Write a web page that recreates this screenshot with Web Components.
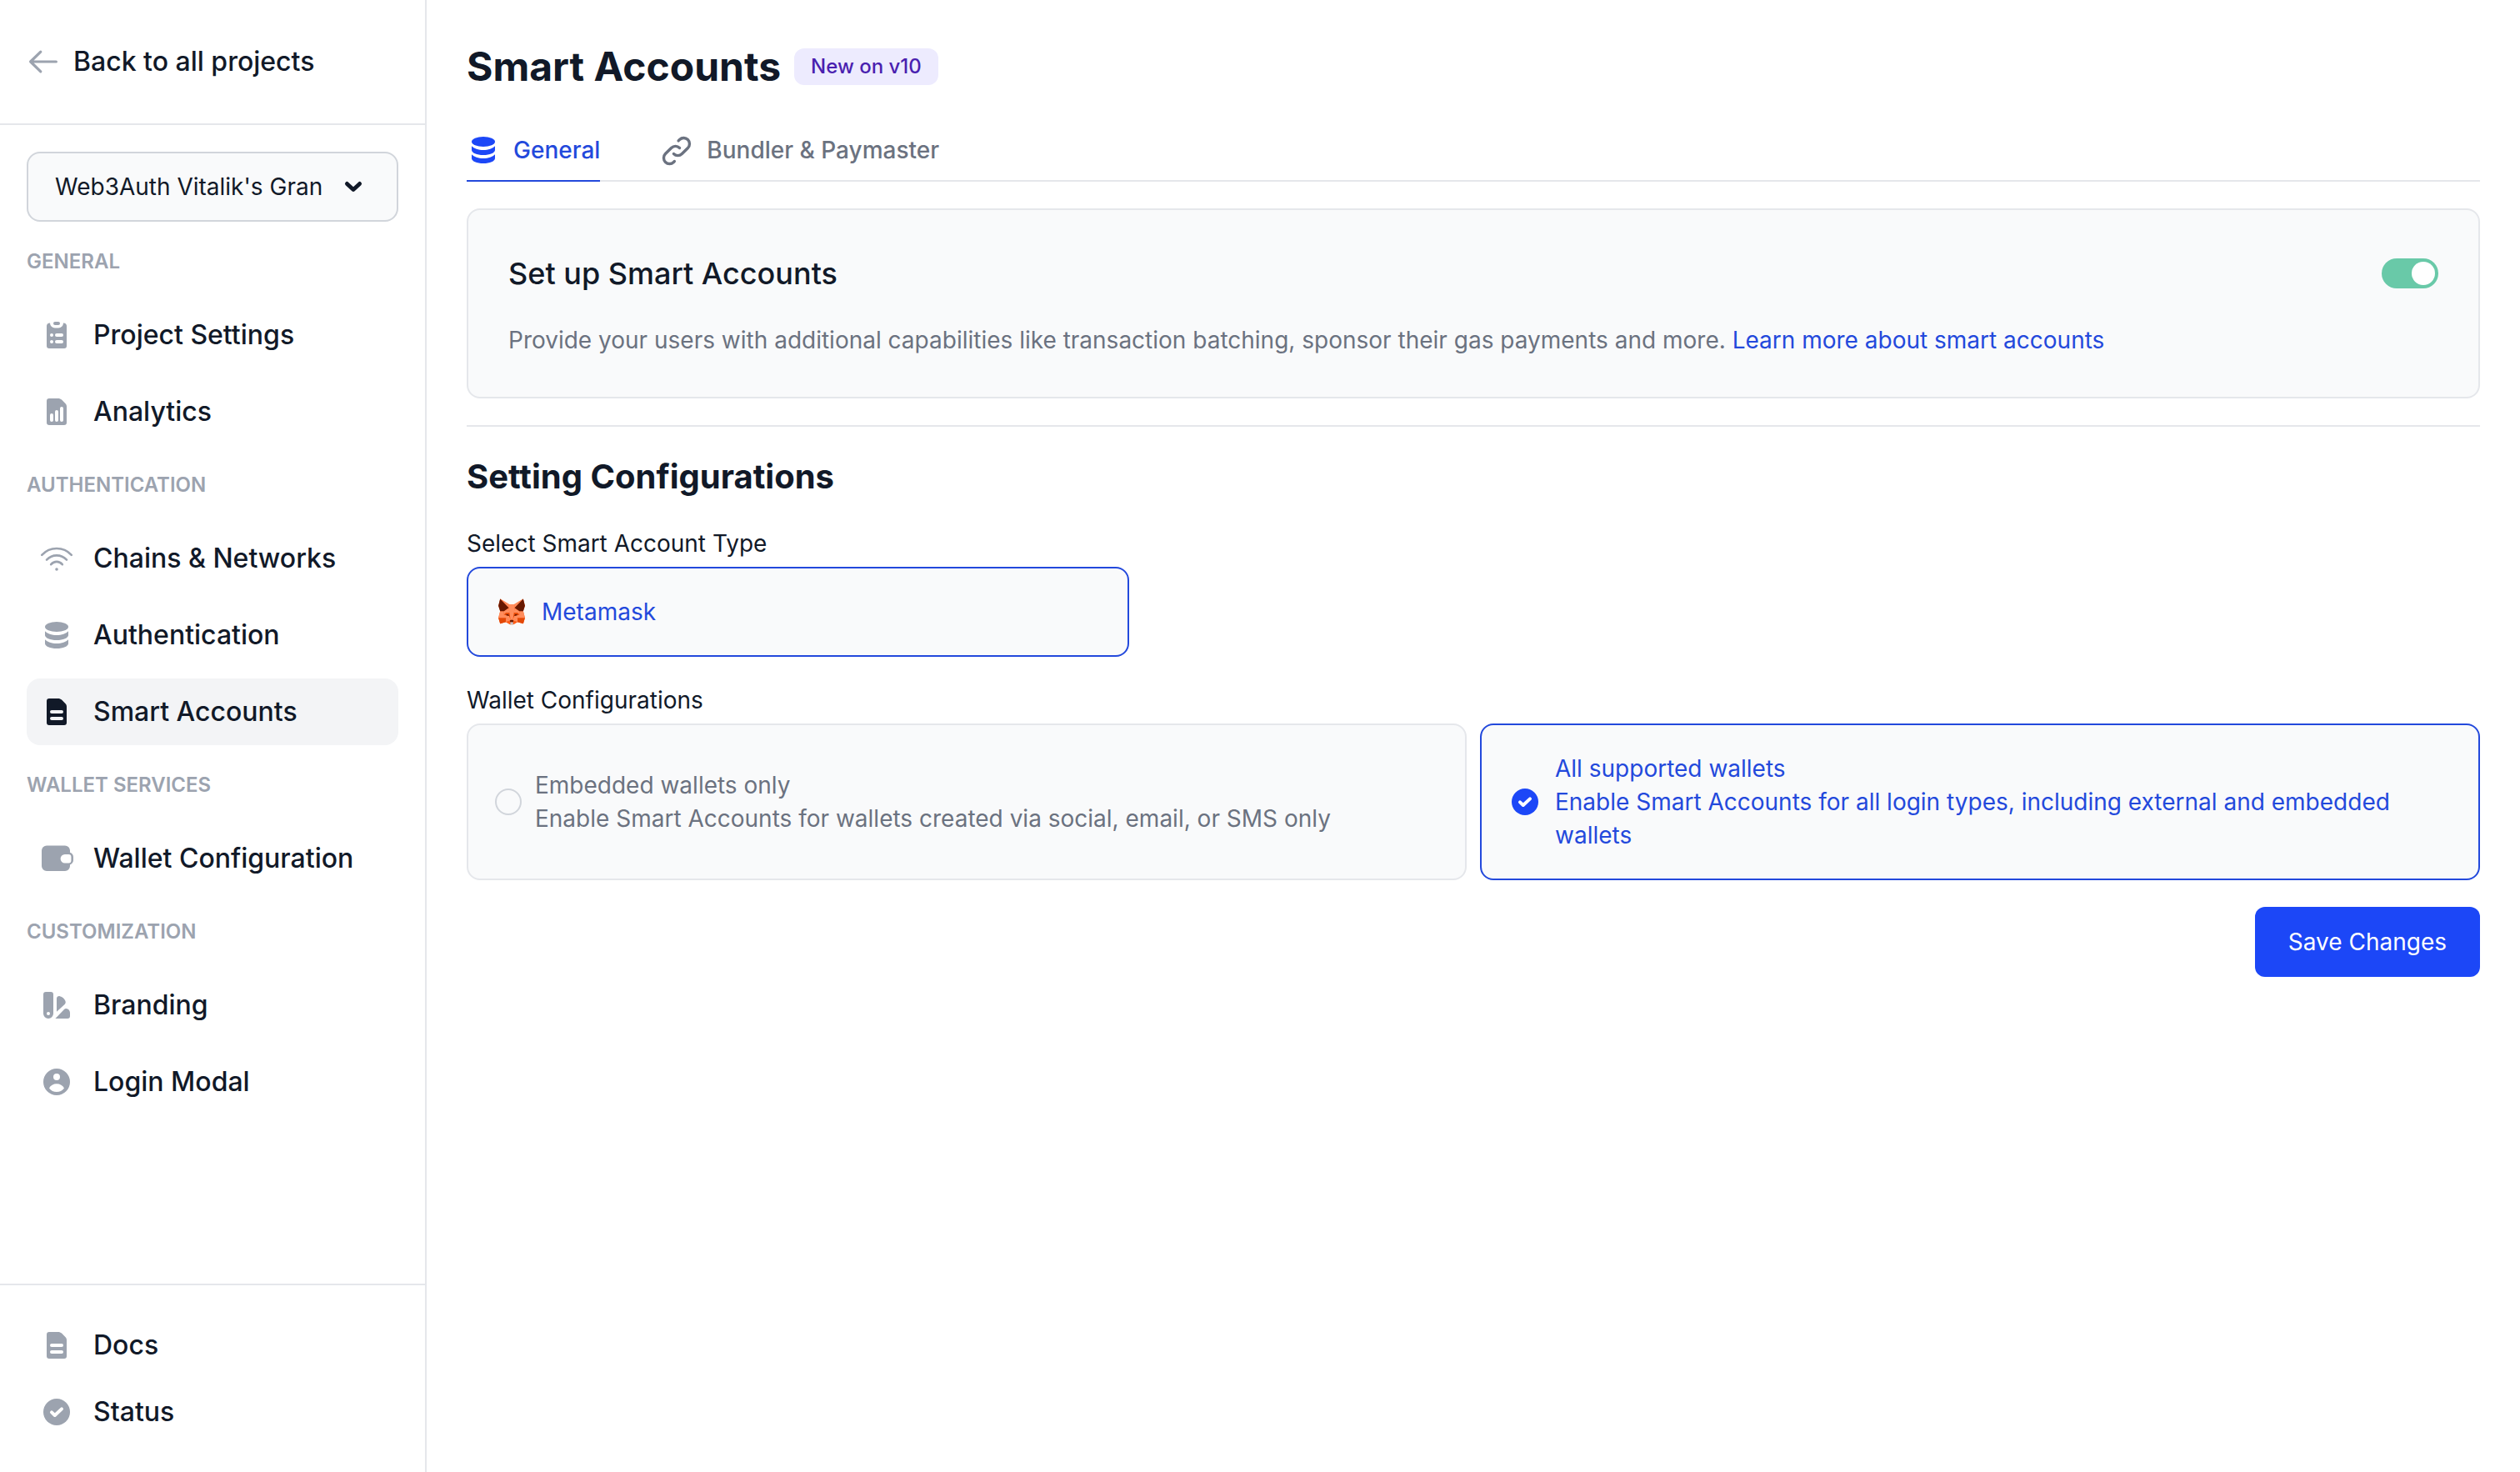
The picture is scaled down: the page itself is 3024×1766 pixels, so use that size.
<!DOCTYPE html>
<html lang="en">
<head>
<meta charset="utf-8">
<meta name="viewport" content="width=device-width, initial-scale=1">
<title>Smart Accounts</title>
<style>
  :root {
    --ink: #111928;
    --muted: #6b7280;
    --soft: #9ca3af;
    --line: #e5e7eb;
    --line-strong: #d1d5db;
    --surface: #f9fafb;
    --primary: #1c47f7;
    --primary-ink: #2349dc;
  }
  body {
    margin: 0;
    background: #fff;
    color: var(--ink);
    font-family: Inter, "Liberation Sans", sans-serif;
    font-size: 28px;
    line-height: 40px;
  }
</style>
</head>
<body>
<dashboard-app></dashboard-app>

<script>
const ICONS = {
  arrow: ['0 0 20 20', '<path d="M17.7 10H2.3M8.4 4.1L2.3 10l6.1 5.9" fill="none" stroke="currentColor" stroke-width="1.6" stroke-linecap="round" stroke-linejoin="round"/>'],
  chevron: ['0 0 20 20', '<path d="M6.2 8.2L10 11.8l3.8-3.6" fill="none" stroke="currentColor" stroke-width="2.4" stroke-linecap="round" stroke-linejoin="round"/>'],
  clipboard: ['0 0 20 20', '<rect x="8" y="2" width="4" height="2" rx="1"/><path fill-rule="evenodd" d="M6 2.8A3 3 0 0 0 9 5.8h2a3 3 0 0 0 3-3 2 2 0 0 1 2 1.6V16.5a1.5 1.5 0 0 1-1.5 1.5h-9A1.5 1.5 0 0 1 4 16.5V4.4a2 2 0 0 1 2-1.6zM7 9a1 1 0 0 0 0 2 1 1 0 0 0 0-2zm3 0a1 1 0 0 0 0 2h3a1 1 0 0 0 0-2zm-3 4a1 1 0 0 0 0 2 1 1 0 0 0 0-2zm3 0a1 1 0 0 0 0 2h3a1 1 0 0 0 0-2z"/>'],
  analytics: ['0 0 20 20', '<path fill-rule="evenodd" d="M5.5 2h5.4c.8 0 1.5.3 2.1.8l2.3 2.3c.5.5.7 1.1.7 1.8V16.5a1.5 1.5 0 0 1-1.5 1.5h-9A1.5 1.5 0 0 1 4 16.5v-13A1.5 1.5 0 0 1 5.5 2zM7 11a1 1 0 0 0-1 1v3a1 1 0 0 0 2 0v-3a1 1 0 0 0-1-1zm3-2a1 1 0 0 0-1 1v5a1 1 0 0 0 2 0v-5a1 1 0 0 0-1-1zm3-2a1 1 0 0 0-1 1v7a1 1 0 0 0 2 0V8a1 1 0 0 0-1-1z"/>'],
  wifi: ['0 0 20 20', '<g fill="none" stroke="currentColor" stroke-width="1.3" stroke-linecap="round"><path d="M1.1 7.9C6 2.7 14 2.7 18.9 7.9M4 10.8c3.3-3.5 8.7-3.5 12 0M6.6 13.6c1.9-2.2 4.9-2.2 6.8 0"/></g><circle cx="10" cy="16.5" r=".9"/>'],
  database: ['0 0 20 20', '<ellipse cx="10" cy="5" rx="7" ry="3"/><path d="M3 7.6C4.4 9 7 10 10 10s5.6-1 7-2.4V10c0 1.7-3.1 3-7 3s-7-1.3-7-3zM3 12.6C4.4 14 7 15 10 15s5.6-1 7-2.4V15c0 1.7-3.1 3-7 3s-7-1.3-7-3z"/>'],
  file: ['0 0 20 20', '<path fill-rule="evenodd" d="M5.5 2h5.4c.8 0 1.5.3 2.1.8l2.3 2.3c.5.5.7 1.1.7 1.8V16.5a1.5 1.5 0 0 1-1.5 1.5h-9A1.5 1.5 0 0 1 4 16.5v-13A1.5 1.5 0 0 1 5.5 2zM7 9a1 1 0 0 0 0 2h6a1 1 0 0 0 0-2zm0 4a1 1 0 0 0 0 2h6a1 1 0 0 0 0-2z"/>'],
  wallet: ['0 0 20 20', '<path fill-rule="evenodd" d="M4 2.3h11a3 3 0 0 1 3 3v1.1c1.2.4 2 1.4 2 2.7v1.9c0 1.3-.8 2.3-2 2.7v.8a3 3 0 0 1-3 3H4a3 3 0 0 1-3-3v-9.2a3 3 0 0 1 3-3zM14.9 7.5a2.6 2.6 0 0 0 0 5.2h2.3a1.5 1.5 0 0 0 1.5-1.5V9a1.5 1.5 0 0 0-1.5-1.5z"/>'],
  swatch: ['0 0 20 20', '<path fill-rule="evenodd" d="M3.5 2h3A1.5 1.5 0 0 1 8 3.5V15a3 3 0 0 1-6 0V3.5A1.5 1.5 0 0 1 3.5 2zM5 14a1 1 0 1 0 0 2 1 1 0 0 0 0-2z"/><path d="M10 13.9V6c0-1 .9-1.6 1.9-1.4 1.5.3 2.8 1.4 3.3 2.8.3.8.2 1.5-.4 2.1zM9.2 18l5.3-5.500c.6-.6 1.4-.6 2.1-.2.9.5 1.4 1.3 1.4 2.3V16.5a1.5 1.5 0 0 1-1.5 1.5z"/>'],
  user: ['0 0 20 20', '<path fill-rule="evenodd" d="M10 2a8 8 0 1 0 0 16 8 8 0 0 0 0-16zM10 5a2 2 0 1 1 0 4 2 2 0 0 1 0-4zM5.5 13.7C6.3 12.1 8 11.1 10 11.1s3.7 1 4.5 2.6C13.4 15.2 11.8 16 10 16s-3.4-.8-4.5-2.3z"/>'],
  check: ['0 0 20 20', '<circle cx="10" cy="10" r="8"/><path d="M7 10.2L8.9 12 13 8.2" fill="none" stroke="#fff" stroke-width="2" stroke-linecap="round" stroke-linejoin="round"/>'],
  link: ['-.75 -.75 20 20', '<path d="M11.013 7.962a3.519 3.519 0 0 0-4.975 0l-3.554 3.555a3.518 3.518 0 0 0 4.975 4.975l.461-.46m-.461-4.515a3.518 3.518 0 0 0 4.975 0l3.553-3.554a3.518 3.518 0 0 0-4.974-4.975l-.713.712" fill="none" stroke="currentColor" stroke-width="1.7" stroke-linecap="round" stroke-linejoin="round"/>'],
  fox: ['-18 -20 178 178', '<path fill="#ff5c16" d="M132.7 132.2l-30.5-9.1-23 13.8H63.1l-23-13.800-30.500 9.100L.3 100.800 9.600 66 .3 36.700 9.600.3l47.600 28.500H85L132.700.3l9.300 36.400-9.300 29.300 9.300 34.800z"/><path fill="#ff8d5d" d="M9.600.3l47.700 28.500-1.900 19.600zM40.100 100.800l21 16-21 6.300zM59.400 74.400l-4-26L29.600 66v18.300l10.500-9.900zM132.700.3L85 28.800l1.900 19.600zM102.200 100.800l-21 16 21 6.300zM112.700 66L86.900 48.400l-4 26h19.300l10.500 9.900z"/><path fill="#e34807" d="M40.100 123.100l-30.500 9.100-9.300-31.400h39.800zM59.400 74.400l5.800 37.600-8.100-20.900-27.500-6.800 10.500-9.900zM102.200 123.100l30.500 9.100 9.300-31.400h-39.800zM82.900 74.400L77.100 112l8-20.900 27.600-6.800-10.500-9.900z"/><path fill="#ff8d5d" d="M.3 100.800L9.600 66h19.900l.1 18.300 27.500 6.800 8.100 20.900-4.100 4.800-21-16zM142 100.800L132.700 66h-20l-.1 18.300-27.500 6.800-8 20.900 4.100 4.800 21-16zM85 28.800H57.300l-1.900 19.500 9.800 63.700h11.900l9.800-63.700z"/><path fill="#661800" d="M9.600.3L.3 36.700 9.600 66h19.900l25.900-17.600zM53.500 82.300h-9l-5 4.800L57 91.400zM132.700.3l9.300 36.400-9.300 29.300h-20L86.900 48.400zM88.800 82.300h9l5 4.800-17.500 4.400zM79.300 124.500l2-7.700-4.100-4.700H65.300l-4.100 4.700 2 7.700z"/><path fill="#c0c4cd" d="M79.300 124.500v12.400h-16v-12.400z"/><path fill="#ff5c16" d="M40.100 123.100l23.100 13.800v-12.400l-2-7.700zM102.200 123.100l-22.900 13.800v-12.400l2-7.700z"/>']
};

/* Registers an element whose shadow root is cloned from one template. */
function define(name, html, setup) {
  const template = document.createElement('template');
  template.innerHTML = '<style>*{box-sizing:border-box}</style>' + html;
  customElements.define(name, class extends HTMLElement {
    connectedCallback() {
      if (this.shadowRoot) return;
      this.attachShadow({ mode: 'open' }).append(template.content.cloneNode(true));
      if (setup) setup(this, this.shadowRoot);
    }
  });
}

define('ui-icon', `
  <style>
    :host { display: block; flex: none; width: 40px; height: 40px; }
    svg { display: block; width: 100%; height: 100%; }
  </style>
  <svg fill="currentColor" aria-hidden="true"></svg>`,
  (host, root) => {
    const [box, art] = ICONS[host.getAttribute('name')];
    const svg = root.querySelector('svg');
    svg.setAttribute('viewBox', box);
    svg.innerHTML = art;
  });

define('nav-item', `
  <style>
    :host { display: block; }
    a {
      display: flex; align-items: center; gap: 24px; height: 80px; padding: 0 16px;
      border-radius: 16px; color: var(--ink); text-decoration: none;
      font-size: 32px; font-weight: 500; white-space: nowrap;
    }
    ui-icon { color: var(--soft); }
    :host([active]) a { background: #f3f4f6; }
    :host([active]) ui-icon { color: var(--ink); }
  </style>
  <a href="#"><slot></slot></a>`,
  (host, root) => {
    const link = root.querySelector('a');
    const icon = document.createElement('ui-icon');
    icon.setAttribute('name', host.getAttribute('icon'));
    link.prepend(icon);
    if (host.hasAttribute('active')) link.setAttribute('aria-current', 'page');
  });

define('nav-group', `
  <style>
    :host { display: block; }
    h2 { margin: 32px 0; color: var(--soft); font-size: 24px; line-height: 32px; font-weight: 600; text-transform: uppercase; }
    div { display: flex; flex-direction: column; gap: 12px; }
  </style>
  <h2></h2>
  <div><slot></slot></div>`,
  (host, root) => { root.querySelector('h2').textContent = host.getAttribute('heading'); });

define('project-select', `
  <style>
    :host { display: grid; align-items: center; }
    select, ui-icon { grid-area: 1 / 1; }
    select {
      appearance: none; width: 100%; height: 84px; margin: 0; padding: 0 80px 0 32px;
      border: 2px solid var(--line-strong); border-radius: 16px; background: var(--surface);
      color: var(--ink); font: inherit;
    }
    ui-icon { justify-self: end; margin-right: 34px; pointer-events: none; }
  </style>
  <select aria-label="Project"><option>Web3Auth Vitalik's Gran</option></select>
  <ui-icon name="chevron"></ui-icon>`);

define('side-bar', `
  <style>
    :host { display: flex; flex-direction: column; width: 512px; flex: none; border-right: 2px solid var(--line); }
    .back {
      display: flex; align-items: center; gap: 16px; height: 150px; padding: 0 32px;
      border-bottom: 2px solid var(--line); color: var(--ink); text-decoration: none;
      font-size: 32px; font-weight: 500;
    }
    .back ui-icon { color: var(--soft); }
    nav { flex: 1; padding: 32px; }
    footer { padding: 32px; border-top: 2px solid var(--line); }
  </style>
  <a class="back" href="#"><ui-icon name="arrow"></ui-icon>Back to all projects</a>
  <nav>
    <project-select></project-select>
    <nav-group heading="General">
      <nav-item icon="clipboard">Project Settings</nav-item>
      <nav-item icon="analytics">Analytics</nav-item>
    </nav-group>
    <nav-group heading="Authentication">
      <nav-item icon="wifi">Chains &amp; Networks</nav-item>
      <nav-item icon="database">Authentication</nav-item>
      <nav-item icon="file" active>Smart Accounts</nav-item>
    </nav-group>
    <nav-group heading="Wallet Services">
      <nav-item icon="wallet">Wallet Configuration</nav-item>
    </nav-group>
    <nav-group heading="Customization">
      <nav-item icon="swatch">Branding</nav-item>
      <nav-item icon="user">Login Modal</nav-item>
    </nav-group>
  </nav>
  <footer>
    <nav-item icon="file">Docs</nav-item>
    <nav-item icon="check">Status</nav-item>
  </footer>`);

define('page-header', `
  <style>
    :host { display: flex; align-items: center; gap: 16px; }
    h1 { margin: 0; font-size: 48px; line-height: 64px; font-weight: 700; }
    .badge { padding: 4px 20px; border-radius: 12px; background: #edebfe; color: #4a1fb0; font-size: 24px; line-height: 36px; font-weight: 500; }
  </style>
  <h1><slot></slot></h1>
  <span class="badge"><slot name="badge"></slot></span>`);

define('tab-bar', `
  <style>
    :host { display: block; }
    nav { display: flex; gap: 72px; border-bottom: 2px solid var(--line); }
    a {
      display: flex; align-items: center; gap: 16px; padding-bottom: 16px; margin-bottom: -2px;
      border-bottom: 2px solid transparent; color: var(--muted); text-decoration: none; font-weight: 500;
    }
    a[aria-current] { color: var(--primary-ink); border-color: var(--primary-ink); }
    a[aria-current] ui-icon { color: var(--primary); }
  </style>
  <nav aria-label="Sections">
    <a href="#" aria-current="page"><ui-icon name="database"></ui-icon>General</a>
    <a href="#"><ui-icon name="link"></ui-icon>Bundler &amp; Paymaster</a>
  </nav>`);

define('feature-card', `
  <style>
    :host { display: block; padding: 48px; border: 2px solid var(--line); border-radius: 16px; background: var(--surface); box-sizing: border-box; }
    label { display: flex; align-items: center; justify-content: space-between; font-size: 36px; line-height: 56px; font-weight: 500; }
    input {
      appearance: none; display: flex; flex: none; justify-content: flex-start; width: 68px; height: 36px;
      margin: 0; padding: 4px; border-radius: 18px; background: var(--line-strong);
    }
    input::before { content: ""; width: 28px; height: 28px; border-radius: 50%; background: #fff; }
    input:checked { justify-content: flex-end; background: #69c9a8; }
    p { margin: 32px 0 0; color: var(--muted); }
    a { color: var(--primary-ink); text-decoration: none; }
  </style>
  <label>Set up Smart Accounts<input type="checkbox" role="switch" checked></label>
  <p>Provide your users with additional capabilities like transaction batching, sponsor their gas payments and more. <a href="#">Learn more about smart accounts</a></p>`);

define('account-type', `
  <style>
    :host { display: block; }
    h3 { margin: 0 0 8px; font-size: 28px; line-height: 40px; font-weight: 400; }
    .grid { display: grid; grid-template-columns: repeat(3, 1fr); gap: 16px; }
    button {
      display: flex; align-items: center; gap: 16px; padding: 32px; border: 2px solid var(--primary-ink);
      border-radius: 16px; background: var(--surface); color: var(--primary-ink); font: inherit; line-height: 40px;
    }
  </style>
  <h3>Select Smart Account Type</h3>
  <div class="grid"><button type="button" aria-pressed="true"><ui-icon name="fox"></ui-icon>Metamask</button></div>`);

define('wallet-options', `
  <style>
    :host { display: block; }
    fieldset { margin: 0; padding: 0; border: 0; min-width: 0; }
    legend { padding: 0; margin-bottom: 8px; }
    .grid { display: grid; grid-template-columns: 1fr 1fr; gap: 16px; }
    label {
      display: flex; align-items: center; gap: 16px; padding: 32px; border: 2px solid var(--line);
      border-radius: 16px; background: var(--surface); color: var(--muted);
    }
    .mark { display: grid; flex: none; place-items: center; }
    .mark > * { grid-area: 1 / 1; }
    input { appearance: none; width: 32px; height: 32px; margin: 0; border: 2px solid var(--line-strong); border-radius: 50%; }
    ui-icon { display: none; color: var(--primary); pointer-events: none; }
    input:checked { border: 0; }
    input:checked + ui-icon { display: block; }
    label:has(:checked) { border-color: var(--primary-ink); color: var(--primary-ink); }
    .text span { display: block; }
  </style>
  <fieldset>
    <legend>Wallet Configurations</legend>
    <div class="grid">
      <label>
        <span class="mark"><input type="radio" name="wallets"><ui-icon name="check"></ui-icon></span>
        <span class="text"><span>Embedded wallets only</span><span>Enable Smart Accounts for wallets created via social, email, or SMS only</span></span>
      </label>
      <label>
        <span class="mark"><input type="radio" name="wallets" checked><ui-icon name="check"></ui-icon></span>
        <span class="text"><span>All supported wallets</span><span>Enable Smart Accounts for all login types, including external and embedded wallets</span></span>
      </label>
    </div>
  </fieldset>`);

define('primary-button', `
  <style>
    :host { display: block; }
    button { display: block; height: 84px; padding: 0 40px; border: 0; border-radius: 12px; background: var(--primary); color: #fff; font: inherit; }
  </style>
  <button type="button"><slot></slot></button>`);

define('dashboard-app', `
  <style>
    :host { display: flex; min-height: 100vh; }
    side-bar { box-sizing: border-box; }
    main { flex: 1; min-width: 0; padding: 48px; display: flex; flex-direction: column; gap: 32px; }
    .top { display: flex; flex-direction: column; gap: 48px; }
    hr { width: 100%; height: 2px; margin: 0; border: 0; background: var(--line); }
    h2 { margin: 0; font-size: 40px; line-height: 56px; font-weight: 700; }
    primary-button { align-self: flex-end; }
  </style>
  <side-bar></side-bar>
  <main>
    <div class="top">
      <page-header>Smart Accounts<span slot="badge">New on v10</span></page-header>
      <tab-bar></tab-bar>
    </div>
    <feature-card></feature-card>
    <hr>
    <h2>Setting Configurations</h2>
    <account-type></account-type>
    <wallet-options></wallet-options>
    <primary-button>Save Changes</primary-button>
  </main>`);
</script>
</body>
</html>
